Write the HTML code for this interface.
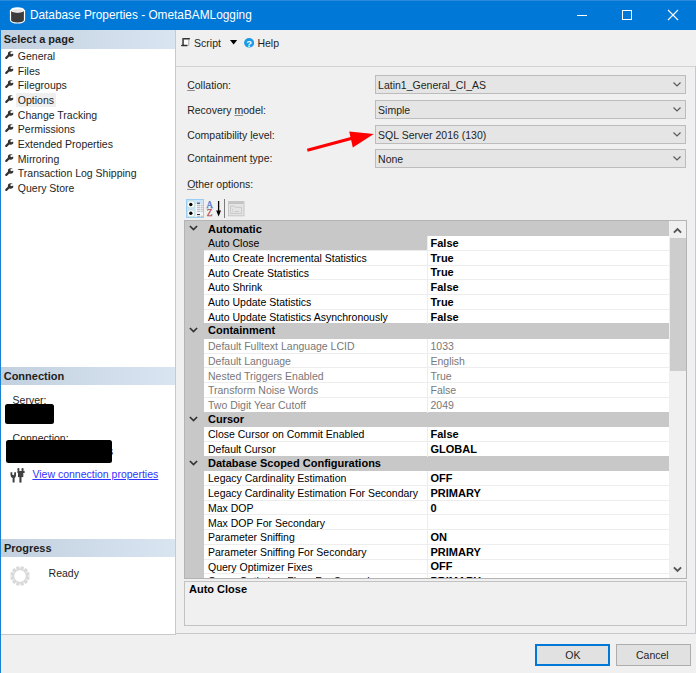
<!DOCTYPE html>
<html><head><meta charset="utf-8"><style>
*{margin:0;padding:0;box-sizing:border-box}
html,body{width:696px;height:673px;overflow:hidden;background:#f0f0f0;font-family:"Liberation Sans",sans-serif;font-size:10.5px;color:#000}
div,span,svg{position:absolute}
.t{white-space:nowrap;line-height:14px}
.b{font-weight:bold;font-size:11px}
.u{text-decoration:underline;text-decoration-color:#8a8a8a}
</style></head><body>
<div style="left:0px;top:0px;width:696px;height:30px;background:#0078d7"></div>
<div style="left:0px;top:0px;width:696px;height:1px;background:#2a8ad9"></div>
<svg style="left:9px;top:6px" width="17" height="18" viewBox="0 0 17 18"><path d="M1.5 4 V14 A6.5 2.8 0 0 0 15.5 14 V4" fill="#3c3c3c" stroke="#fff" stroke-width="1.2"/><ellipse cx="8.5" cy="4" rx="7" ry="2.8" fill="#fff"/><ellipse cx="8.5" cy="4.6" rx="5.6" ry="1.6" fill="#e6e6e6"/></svg>
<div class="t" style="left:29.9px;top:8.09px;font-size:11.85px;color:#fff;">Database Properties - OmetaBAMLogging</div>
<div style="left:577px;top:15px;width:10px;height:1px;background:#fff"></div>
<svg style="left:622px;top:10px" width="11" height="11"><rect x="0.5" y="0.5" width="9" height="9" fill="none" stroke="#fff" stroke-width="1"/></svg>
<svg style="left:667px;top:9px" width="12" height="12"><path d="M1 1L11 11M11 1L1 11" stroke="#fff" stroke-width="1.1"/></svg>
<div style="left:0px;top:30px;width:1px;height:643px;background:#1a82d4"></div>
<div style="left:1px;top:30px;width:174px;height:604px;background:#fff"></div>
<div style="left:175px;top:30px;width:1px;height:605px;background:#c8c9cc"></div>
<div style="left:1px;top:634px;width:175px;height:1px;background:#c8c9cc"></div>
<div style="left:1px;top:30px;width:174px;height:19px;background:linear-gradient(to right,#c2d0df,#d9e5f1)"></div>
<div class="t" style="left:3.7px;top:32.19px;font-size:11px;font-weight:bold;color:#1e1e1e;">Select a page</div>
<div style="left:16px;top:93px;width:40px;height:14px;background:#efefef"></div>
<svg style="left:5px;top:51.20px" width="9" height="9" viewBox="0 0 9 9"><path d="M1.3 6.9 L4.4 3.8" stroke="#333" stroke-width="2.2" stroke-linecap="round"/><circle cx="5.6" cy="2.9" r="2.75" fill="#333"/><path d="M5.7 2.8 L8.8 -0.3 L9.5 2.6 Z" fill="#fff"/><circle cx="6.4" cy="2.1" r="1.05" fill="#fff"/></svg>
<div class="t" style="left:17.8px;top:49.16px;font-size:10.5px;color:#1e1e1e;">General</div>
<svg style="left:5px;top:65.82px" width="9" height="9" viewBox="0 0 9 9"><path d="M1.3 6.9 L4.4 3.8" stroke="#333" stroke-width="2.2" stroke-linecap="round"/><circle cx="5.6" cy="2.9" r="2.75" fill="#333"/><path d="M5.7 2.8 L8.8 -0.3 L9.5 2.6 Z" fill="#fff"/><circle cx="6.4" cy="2.1" r="1.05" fill="#fff"/></svg>
<div class="t" style="left:17.8px;top:63.78px;font-size:10.5px;color:#1e1e1e;">Files</div>
<svg style="left:5px;top:80.44px" width="9" height="9" viewBox="0 0 9 9"><path d="M1.3 6.9 L4.4 3.8" stroke="#333" stroke-width="2.2" stroke-linecap="round"/><circle cx="5.6" cy="2.9" r="2.75" fill="#333"/><path d="M5.7 2.8 L8.8 -0.3 L9.5 2.6 Z" fill="#fff"/><circle cx="6.4" cy="2.1" r="1.05" fill="#fff"/></svg>
<div class="t" style="left:17.8px;top:78.40px;font-size:10.5px;color:#1e1e1e;">Filegroups</div>
<svg style="left:5px;top:95.06px" width="9" height="9" viewBox="0 0 9 9"><path d="M1.3 6.9 L4.4 3.8" stroke="#333" stroke-width="2.2" stroke-linecap="round"/><circle cx="5.6" cy="2.9" r="2.75" fill="#333"/><path d="M5.7 2.8 L8.8 -0.3 L9.5 2.6 Z" fill="#fff"/><circle cx="6.4" cy="2.1" r="1.05" fill="#fff"/></svg>
<div class="t" style="left:17.8px;top:93.02px;font-size:10.5px;color:#1e1e1e;">Options</div>
<svg style="left:5px;top:109.68px" width="9" height="9" viewBox="0 0 9 9"><path d="M1.3 6.9 L4.4 3.8" stroke="#333" stroke-width="2.2" stroke-linecap="round"/><circle cx="5.6" cy="2.9" r="2.75" fill="#333"/><path d="M5.7 2.8 L8.8 -0.3 L9.5 2.6 Z" fill="#fff"/><circle cx="6.4" cy="2.1" r="1.05" fill="#fff"/></svg>
<div class="t" style="left:17.8px;top:107.64px;font-size:10.5px;color:#1e1e1e;">Change Tracking</div>
<svg style="left:5px;top:124.30px" width="9" height="9" viewBox="0 0 9 9"><path d="M1.3 6.9 L4.4 3.8" stroke="#333" stroke-width="2.2" stroke-linecap="round"/><circle cx="5.6" cy="2.9" r="2.75" fill="#333"/><path d="M5.7 2.8 L8.8 -0.3 L9.5 2.6 Z" fill="#fff"/><circle cx="6.4" cy="2.1" r="1.05" fill="#fff"/></svg>
<div class="t" style="left:17.8px;top:122.26px;font-size:10.5px;color:#1e1e1e;">Permissions</div>
<svg style="left:5px;top:138.92px" width="9" height="9" viewBox="0 0 9 9"><path d="M1.3 6.9 L4.4 3.8" stroke="#333" stroke-width="2.2" stroke-linecap="round"/><circle cx="5.6" cy="2.9" r="2.75" fill="#333"/><path d="M5.7 2.8 L8.8 -0.3 L9.5 2.6 Z" fill="#fff"/><circle cx="6.4" cy="2.1" r="1.05" fill="#fff"/></svg>
<div class="t" style="left:17.8px;top:136.88px;font-size:10.5px;color:#1e1e1e;">Extended Properties</div>
<svg style="left:5px;top:153.54px" width="9" height="9" viewBox="0 0 9 9"><path d="M1.3 6.9 L4.4 3.8" stroke="#333" stroke-width="2.2" stroke-linecap="round"/><circle cx="5.6" cy="2.9" r="2.75" fill="#333"/><path d="M5.7 2.8 L8.8 -0.3 L9.5 2.6 Z" fill="#fff"/><circle cx="6.4" cy="2.1" r="1.05" fill="#fff"/></svg>
<div class="t" style="left:17.8px;top:151.50px;font-size:10.5px;color:#1e1e1e;">Mirroring</div>
<svg style="left:5px;top:168.16px" width="9" height="9" viewBox="0 0 9 9"><path d="M1.3 6.9 L4.4 3.8" stroke="#333" stroke-width="2.2" stroke-linecap="round"/><circle cx="5.6" cy="2.9" r="2.75" fill="#333"/><path d="M5.7 2.8 L8.8 -0.3 L9.5 2.6 Z" fill="#fff"/><circle cx="6.4" cy="2.1" r="1.05" fill="#fff"/></svg>
<div class="t" style="left:17.8px;top:166.12px;font-size:10.5px;color:#1e1e1e;">Transaction Log Shipping</div>
<svg style="left:5px;top:182.78px" width="9" height="9" viewBox="0 0 9 9"><path d="M1.3 6.9 L4.4 3.8" stroke="#333" stroke-width="2.2" stroke-linecap="round"/><circle cx="5.6" cy="2.9" r="2.75" fill="#333"/><path d="M5.7 2.8 L8.8 -0.3 L9.5 2.6 Z" fill="#fff"/><circle cx="6.4" cy="2.1" r="1.05" fill="#fff"/></svg>
<div class="t" style="left:17.8px;top:180.74px;font-size:10.5px;color:#1e1e1e;">Query Store</div>
<div style="left:1px;top:367px;width:174px;height:18px;background:linear-gradient(to right,#c2d0df,#d9e5f1)"></div>
<div class="t" style="left:3.7px;top:369.19px;font-size:11px;font-weight:bold;color:#1e1e1e;">Connection</div>
<div class="t" style="left:12.6px;top:393.06px;font-size:10.5px;color:#1e1e1e;">Server:</div>
<div style="left:5px;top:404px;width:49px;height:20px;background:#000;border-radius:2.5px"></div>
<div class="t" style="left:12.6px;top:431.36px;font-size:10.5px;color:#1e1e1e;">Connection:</div>
<div class="t" style="left:108px;top:443.96px;font-size:10.5px;color:#1e1e1e;">s</div>
<div style="left:6px;top:440px;width:106px;height:23px;background:#000;border-radius:2.5px"></div>
<svg style="left:6px;top:464px" width="24" height="22" viewBox="0 0 24 22"><path d="M4.5 8.3 H6.3 V10.6 Q7.25 11.9 8.2 10.6 V8.3 H10 V11 Q10 13.4 8.6 13.9 V18.6 H6.6 V13.9 Q4.5 13.4 4.5 11 Z" fill="#404040"/><rect x="11.4" y="4.1" width="2" height="2.8" rx="0.9" fill="#404040"/><rect x="15.5" y="4.1" width="2.1" height="2.8" rx="0.9" fill="#404040"/><rect x="11.4" y="6.9" width="7.2" height="2.1" fill="#404040"/><rect x="12" y="9" width="5.3" height="4.1" fill="#404040"/><rect x="13.4" y="13" width="2.1" height="5.6" fill="#404040"/></svg>
<div class="t" style="left:32.4px;top:466.96px;font-size:10.5px;color:#3333ff;text-decoration:underline;">View connection properties</div>
<div style="left:1px;top:539px;width:174px;height:18px;background:linear-gradient(to right,#c2d0df,#d9e5f1)"></div>
<div class="t" style="left:3.9px;top:540.69px;font-size:11px;font-weight:bold;color:#1e1e1e;">Progress</div>
<svg style="left:10.3px;top:565.8px" width="20" height="20" viewBox="0 0 20 20"><line x1="15.51" y1="11.48" x2="19.37" y2="12.51" stroke="#d9d9d9" stroke-width="3.4"/><line x1="14.03" y1="14.03" x2="16.86" y2="16.86" stroke="#d9d9d9" stroke-width="3.4"/><line x1="11.48" y1="15.51" x2="12.51" y2="19.37" stroke="#d9d9d9" stroke-width="3.4"/><line x1="8.52" y1="15.51" x2="7.49" y2="19.37" stroke="#d9d9d9" stroke-width="3.4"/><line x1="5.97" y1="14.03" x2="3.14" y2="16.86" stroke="#d9d9d9" stroke-width="3.4"/><line x1="4.49" y1="11.48" x2="0.63" y2="12.51" stroke="#d9d9d9" stroke-width="3.4"/><line x1="4.49" y1="8.52" x2="0.63" y2="7.49" stroke="#d9d9d9" stroke-width="3.4"/><line x1="5.97" y1="5.97" x2="3.14" y2="3.14" stroke="#d9d9d9" stroke-width="3.4"/><line x1="8.52" y1="4.49" x2="7.49" y2="0.63" stroke="#d9d9d9" stroke-width="3.4"/><line x1="11.48" y1="4.49" x2="12.51" y2="0.63" stroke="#d9d9d9" stroke-width="3.4"/><line x1="14.03" y1="5.97" x2="16.86" y2="3.14" stroke="#d9d9d9" stroke-width="3.4"/><line x1="15.51" y1="8.52" x2="19.37" y2="7.49" stroke="#d9d9d9" stroke-width="3.4"/></svg>
<div class="t" style="left:48.6px;top:565.76px;font-size:10.5px;color:#1e1e1e;">Ready</div>
<svg style="left:180px;top:37px" width="11" height="10" viewBox="0 0 11 10"><rect x="3.8" y="2.5" width="4.6" height="6" fill="#fbfbfb"/><rect x="8.2" y="2.5" width="1.1" height="6.3" fill="#b0b0b0"/><path d="M3.3 1 H9.3 A0.8 0.8 0 0 1 9.3 2.6 H3.3 Z" fill="#333"/><rect x="2.3" y="1" width="1.5" height="7" fill="#383838"/><path d="M1.8 7.7 H7.5 V9.2 H1.8 A0.75 0.75 0 0 1 1.8 7.7 Z" fill="#2e2e2e"/></svg>
<div class="t" style="left:194.1px;top:35.76px;font-size:10.5px;color:#1e1e1e;">Script</div>
<svg style="left:229.8px;top:40.3px" width="8" height="5"><path d="M0 0H7.2L3.6 4.6Z" fill="#000"/></svg>
<svg style="left:243.9px;top:37.8px" width="10.2" height="10" viewBox="0 0 10.2 10"><ellipse cx="5.1" cy="4.8" rx="5.05" ry="4.75" fill="#1a9ae6"/><text x="5.1" y="8.5" font-family="Liberation Sans" font-weight="bold" font-size="9.5" fill="#fff" text-anchor="middle">?</text></svg>
<div class="t" style="left:257.4px;top:35.76px;font-size:10.5px;color:#1e1e1e;">Help</div>
<div style="left:176px;top:66px;width:519px;height:1px;background:#d3d3d6"></div>
<div style="left:695px;top:66px;width:1px;height:568px;background:#c8c9cc"></div>
<div style="left:176px;top:633px;width:520px;height:1px;background:#c8c9cc"></div>
<div class="t" style="left:187.2px;top:78.16px;font-size:10.5px;color:#1e1e1e;"><span class="u" style="position:static">C</span>ollation:</div>
<div class="t" style="left:187.2px;top:102.86px;font-size:10.5px;color:#1e1e1e;">Recovery <span class="u" style="position:static">m</span>odel:</div>
<div class="t" style="left:187.2px;top:127.66px;font-size:10.5px;color:#1e1e1e;">Compatibility <span class="u" style="position:static">l</span>evel:</div>
<div class="t" style="left:187.2px;top:151.36px;font-size:10.5px;color:#1e1e1e;">Containment <span class="u" style="position:static">t</span>ype:</div>
<div class="t" style="left:187.2px;top:177.16px;font-size:10.5px;color:#1e1e1e;"><span class="u" style="position:static">O</span>ther options:</div>
<div style="left:375px;top:75px;width:311px;height:19px;background:#e5e5e5;border:1px solid #bcbcbc"></div>
<div class="t" style="left:378.1px;top:77.86px;font-size:10.5px;color:#1e1e1e;">Latin1_General_CI_AS</div>
<svg style="left:673px;top:82.2px" width="8" height="5" viewBox="0 0 8 5"><path d="M0.5 0.5L4 4L7.5 0.5" fill="none" stroke="#5a5a5a" stroke-width="1.2"/></svg>
<div style="left:375px;top:100px;width:311px;height:19px;background:#e5e5e5;border:1px solid #bcbcbc"></div>
<div class="t" style="left:378.1px;top:102.86px;font-size:10.5px;color:#1e1e1e;">Simple</div>
<svg style="left:673px;top:107.2px" width="8" height="5" viewBox="0 0 8 5"><path d="M0.5 0.5L4 4L7.5 0.5" fill="none" stroke="#5a5a5a" stroke-width="1.2"/></svg>
<div style="left:375px;top:125px;width:311px;height:19px;background:#e5e5e5;border:1px solid #bcbcbc"></div>
<div class="t" style="left:378.1px;top:127.86px;font-size:10.5px;color:#1e1e1e;">SQL Server 2016 (130)</div>
<svg style="left:673px;top:132.2px" width="8" height="5" viewBox="0 0 8 5"><path d="M0.5 0.5L4 4L7.5 0.5" fill="none" stroke="#5a5a5a" stroke-width="1.2"/></svg>
<div style="left:375px;top:149px;width:311px;height:19px;background:#e5e5e5;border:1px solid #bcbcbc"></div>
<div class="t" style="left:378.1px;top:151.86px;font-size:10.5px;color:#1e1e1e;">None</div>
<svg style="left:673px;top:156.2px" width="8" height="5" viewBox="0 0 8 5"><path d="M0.5 0.5L4 4L7.5 0.5" fill="none" stroke="#5a5a5a" stroke-width="1.2"/></svg>
<svg style="left:300px;top:125px" width="80" height="30" viewBox="300 125 80 30"><path d="M307.3 150.3 L352 138.3" stroke="#ff0000" stroke-width="3"/><path d="M349.2 131.5 L373.8 134 L352.8 147.6 Z" fill="#ff0000"/></svg>
<div style="left:186px;top:199px;width:18px;height:19px;background:#cce4f7;border:1px solid #99cdf3"></div>
<svg style="left:186px;top:199px" width="18" height="19" viewBox="0 0 18 19"><rect x="1.3" y="2" width="7.3" height="6.8" rx="2.2" fill="#fbfbfb" stroke="#b5dccf" stroke-width="0.8"/><circle cx="4.8" cy="5.5" r="1.7" fill="#000"/><rect x="1.3" y="11" width="7.3" height="6.8" rx="2.2" fill="#fbfbfb" stroke="#b5dccf" stroke-width="0.8"/><circle cx="4.8" cy="14.3" r="1.7" fill="#000"/><rect x="9.6" y="5" width="7.4" height="13" fill="#f2f6fa"/><path d="M11 4.2h3M11 15.5h3" stroke="#333" stroke-width="1"/><path d="M11 6.3h3M11 8.3h3M11 10.3h3M11 12.3h3M11 17.3h3M14.6 6.3h2.2M14.6 8.3h2.2M14.6 10.3h2.2M14.6 12.3h2.2M14.6 17.3h2.2" stroke="#9a9a9a" stroke-width="0.7"/></svg>
<svg style="left:205px;top:200px" width="17" height="17" viewBox="0 0 17 17"><text x="4.6" y="7.9" font-family="Liberation Serif" font-size="9.4" fill="#4f76cc" text-anchor="middle" stroke="#4f76cc" stroke-width="0.25">A</text><text x="4.6" y="16" font-family="Liberation Serif" font-size="9.4" fill="#b24d48" text-anchor="middle" stroke="#b24d48" stroke-width="0.25">Z</text><path d="M13.6 1V13" stroke="#000" stroke-width="1.3"/><path d="M11.2 10.6L13.6 16.4L16 10.6Z" fill="#000"/></svg>
<div style="left:224px;top:199px;width:1px;height:19px;background:#7a7a7a"></div>
<svg style="left:228px;top:201px" width="17" height="16" viewBox="0 0 17 16"><rect x="0.5" y="0.5" width="15.5" height="14.3" fill="#e4e4e4" stroke="#c6c6c6"/><rect x="1" y="1" width="14.5" height="2" fill="#c4c4c4"/><path d="M2.6 12.6 V5 H6 L7.4 6.3 H13.6 V12.6 Z" fill="none" stroke="#c2c2c2" stroke-width="0.8"/><path d="M4 8.5h1.2M4 10.6h1.2M6.5 10.6h4.5" stroke="#bdbdbd" stroke-width="0.8"/></svg>
<div style="left:184px;top:220px;width:503px;height:359px;background:#f0f0f0;border:1px solid #b4b4b4"></div>
<div style="left:185px;top:221px;width:501px;height:357px;overflow:hidden"><div style="left:0;top:0;width:484px;height:357px;background:#c8c8c8"></div><svg style="left:4.4px;top:4px" width="10" height="7" viewBox="0 0 10 7"><path d="M0.9 1L4.5 4.6L8.1 1" fill="none" stroke="#333" stroke-width="1.7"/></svg><div class="t" style="left:23px;top:0.90px;font-size:11px;font-weight:bold;color:#000">Automatic</div><div style="left:243px;top:15px;width:241px;height:14px;background:#fff"></div><div style="left:19px;top:29px;width:465px;height:1px;background:#ededed"></div><div style="left:242px;top:15px;width:1px;height:15px;background:#ededed"></div><div class="t" style="left:23px;top:15.26px;font-size:10.5px;color:#000">Auto Close</div><div class="t" style="left:245.5px;top:15.09px;font-size:11px;font-weight:bold;color:#000">False</div><div style="left:19px;top:30px;width:223px;height:14px;background:#fff"></div><div style="left:243px;top:30px;width:241px;height:14px;background:#fff"></div><div style="left:19px;top:44px;width:465px;height:1px;background:#ededed"></div><div style="left:242px;top:30px;width:1px;height:15px;background:#ededed"></div><div class="t" style="left:23px;top:29.96px;font-size:10.5px;color:#000">Auto Create Incremental Statistics</div><div class="t" style="left:245.5px;top:29.79px;font-size:11px;font-weight:bold;color:#000">True</div><div style="left:19px;top:45px;width:223px;height:13px;background:#fff"></div><div style="left:243px;top:45px;width:241px;height:13px;background:#fff"></div><div style="left:19px;top:58px;width:465px;height:1px;background:#ededed"></div><div style="left:242px;top:45px;width:1px;height:14px;background:#ededed"></div><div class="t" style="left:23px;top:44.66px;font-size:10.5px;color:#000">Auto Create Statistics</div><div class="t" style="left:245.5px;top:44.49px;font-size:11px;font-weight:bold;color:#000">True</div><div style="left:19px;top:59px;width:223px;height:14px;background:#fff"></div><div style="left:243px;top:59px;width:241px;height:14px;background:#fff"></div><div style="left:19px;top:73px;width:465px;height:1px;background:#ededed"></div><div style="left:242px;top:59px;width:1px;height:15px;background:#ededed"></div><div class="t" style="left:23px;top:59.36px;font-size:10.5px;color:#000">Auto Shrink</div><div class="t" style="left:245.5px;top:59.19px;font-size:11px;font-weight:bold;color:#000">False</div><div style="left:19px;top:74px;width:223px;height:14px;background:#fff"></div><div style="left:243px;top:74px;width:241px;height:14px;background:#fff"></div><div style="left:19px;top:88px;width:465px;height:1px;background:#ededed"></div><div style="left:242px;top:74px;width:1px;height:15px;background:#ededed"></div><div class="t" style="left:23px;top:74.06px;font-size:10.5px;color:#000">Auto Update Statistics</div><div class="t" style="left:245.5px;top:73.89px;font-size:11px;font-weight:bold;color:#000">True</div><div style="left:19px;top:89px;width:223px;height:13px;background:#fff"></div><div style="left:243px;top:89px;width:241px;height:13px;background:#fff"></div><div style="left:242px;top:89px;width:1px;height:14px;background:#ededed"></div><div class="t" style="left:23px;top:88.76px;font-size:10.5px;color:#000">Auto Update Statistics Asynchronously</div><div class="t" style="left:245.5px;top:88.59px;font-size:11px;font-weight:bold;color:#000">False</div><svg style="left:4.4px;top:106px" width="10" height="7" viewBox="0 0 10 7"><path d="M0.9 1L4.5 4.6L8.1 1" fill="none" stroke="#333" stroke-width="1.7"/></svg><div class="t" style="left:23px;top:102.40px;font-size:11px;font-weight:bold;color:#000">Containment</div><div style="left:19px;top:118px;width:223px;height:14px;background:#fff"></div><div style="left:243px;top:118px;width:241px;height:14px;background:#fff"></div><div style="left:19px;top:132px;width:465px;height:1px;background:#ededed"></div><div style="left:242px;top:118px;width:1px;height:15px;background:#ededed"></div><div class="t" style="left:23px;top:118.16px;font-size:10.5px;color:#787878">Default Fulltext Language LCID</div><div class="t" style="left:245.5px;top:118.16px;font-size:10.5px;color:#787878">1033</div><div style="left:19px;top:133px;width:223px;height:13px;background:#fff"></div><div style="left:243px;top:133px;width:241px;height:13px;background:#fff"></div><div style="left:19px;top:146px;width:465px;height:1px;background:#ededed"></div><div style="left:242px;top:133px;width:1px;height:14px;background:#ededed"></div><div class="t" style="left:23px;top:132.86px;font-size:10.5px;color:#787878">Default Language</div><div class="t" style="left:245.5px;top:132.86px;font-size:10.5px;color:#787878">English</div><div style="left:19px;top:147px;width:223px;height:14px;background:#fff"></div><div style="left:243px;top:147px;width:241px;height:14px;background:#fff"></div><div style="left:19px;top:161px;width:465px;height:1px;background:#ededed"></div><div style="left:242px;top:147px;width:1px;height:15px;background:#ededed"></div><div class="t" style="left:23px;top:147.56px;font-size:10.5px;color:#787878">Nested Triggers Enabled</div><div class="t" style="left:245.5px;top:147.56px;font-size:10.5px;color:#787878">True</div><div style="left:19px;top:162px;width:223px;height:14px;background:#fff"></div><div style="left:243px;top:162px;width:241px;height:14px;background:#fff"></div><div style="left:19px;top:176px;width:465px;height:1px;background:#ededed"></div><div style="left:242px;top:162px;width:1px;height:15px;background:#ededed"></div><div class="t" style="left:23px;top:162.26px;font-size:10.5px;color:#787878">Transform Noise Words</div><div class="t" style="left:245.5px;top:162.26px;font-size:10.5px;color:#787878">False</div><div style="left:19px;top:177px;width:223px;height:14px;background:#fff"></div><div style="left:243px;top:177px;width:241px;height:14px;background:#fff"></div><div style="left:242px;top:177px;width:1px;height:15px;background:#ededed"></div><div class="t" style="left:23px;top:176.96px;font-size:10.5px;color:#787878">Two Digit Year Cutoff</div><div class="t" style="left:245.5px;top:176.96px;font-size:10.5px;color:#787878">2049</div><svg style="left:4.4px;top:195px" width="10" height="7" viewBox="0 0 10 7"><path d="M0.9 1L4.5 4.6L8.1 1" fill="none" stroke="#333" stroke-width="1.7"/></svg><div class="t" style="left:23px;top:191.40px;font-size:11px;font-weight:bold;color:#000">Cursor</div><div style="left:19px;top:206px;width:223px;height:14px;background:#fff"></div><div style="left:243px;top:206px;width:241px;height:14px;background:#fff"></div><div style="left:19px;top:220px;width:465px;height:1px;background:#ededed"></div><div style="left:242px;top:206px;width:1px;height:15px;background:#ededed"></div><div class="t" style="left:23px;top:206.36px;font-size:10.5px;color:#000">Close Cursor on Commit Enabled</div><div class="t" style="left:245.5px;top:206.19px;font-size:11px;font-weight:bold;color:#000">False</div><div style="left:19px;top:221px;width:223px;height:14px;background:#fff"></div><div style="left:243px;top:221px;width:241px;height:14px;background:#fff"></div><div style="left:242px;top:221px;width:1px;height:15px;background:#ededed"></div><div class="t" style="left:23px;top:221.06px;font-size:10.5px;color:#000">Default Cursor</div><div class="t" style="left:245.5px;top:220.89px;font-size:11px;font-weight:bold;color:#000">GLOBAL</div><svg style="left:4.4px;top:239px" width="10" height="7" viewBox="0 0 10 7"><path d="M0.9 1L4.5 4.6L8.1 1" fill="none" stroke="#333" stroke-width="1.7"/></svg><div class="t" style="left:23px;top:235.40px;font-size:11px;font-weight:bold;color:#000">Database Scoped Configurations</div><div style="left:19px;top:250px;width:223px;height:14px;background:#fff"></div><div style="left:243px;top:250px;width:241px;height:14px;background:#fff"></div><div style="left:19px;top:264px;width:465px;height:1px;background:#ededed"></div><div style="left:242px;top:250px;width:1px;height:15px;background:#ededed"></div><div class="t" style="left:23px;top:250.46px;font-size:10.5px;color:#000">Legacy Cardinality Estimation</div><div class="t" style="left:245.5px;top:250.29px;font-size:11px;font-weight:bold;color:#000">OFF</div><div style="left:19px;top:265px;width:223px;height:14px;background:#fff"></div><div style="left:243px;top:265px;width:241px;height:14px;background:#fff"></div><div style="left:19px;top:279px;width:465px;height:1px;background:#ededed"></div><div style="left:242px;top:265px;width:1px;height:15px;background:#ededed"></div><div class="t" style="left:23px;top:265.16px;font-size:10.5px;color:#000">Legacy Cardinality Estimation For Secondary</div><div class="t" style="left:245.5px;top:264.99px;font-size:11px;font-weight:bold;color:#000">PRIMARY</div><div style="left:19px;top:280px;width:223px;height:13px;background:#fff"></div><div style="left:243px;top:280px;width:241px;height:13px;background:#fff"></div><div style="left:19px;top:293px;width:465px;height:1px;background:#ededed"></div><div style="left:242px;top:280px;width:1px;height:14px;background:#ededed"></div><div class="t" style="left:23px;top:279.86px;font-size:10.5px;color:#000">Max DOP</div><div class="t" style="left:245.5px;top:279.69px;font-size:11px;font-weight:bold;color:#000">0</div><div style="left:19px;top:294px;width:223px;height:14px;background:#fff"></div><div style="left:243px;top:294px;width:241px;height:14px;background:#fff"></div><div style="left:19px;top:308px;width:465px;height:1px;background:#ededed"></div><div style="left:242px;top:294px;width:1px;height:15px;background:#ededed"></div><div class="t" style="left:23px;top:294.56px;font-size:10.5px;color:#000">Max DOP For Secondary</div><div style="left:19px;top:309px;width:223px;height:14px;background:#fff"></div><div style="left:243px;top:309px;width:241px;height:14px;background:#fff"></div><div style="left:19px;top:323px;width:465px;height:1px;background:#ededed"></div><div style="left:242px;top:309px;width:1px;height:15px;background:#ededed"></div><div class="t" style="left:23px;top:309.26px;font-size:10.5px;color:#000">Parameter Sniffing</div><div class="t" style="left:245.5px;top:309.09px;font-size:11px;font-weight:bold;color:#000">ON</div><div style="left:19px;top:324px;width:223px;height:14px;background:#fff"></div><div style="left:243px;top:324px;width:241px;height:14px;background:#fff"></div><div style="left:19px;top:338px;width:465px;height:1px;background:#ededed"></div><div style="left:242px;top:324px;width:1px;height:15px;background:#ededed"></div><div class="t" style="left:23px;top:323.96px;font-size:10.5px;color:#000">Parameter Sniffing For Secondary</div><div class="t" style="left:245.5px;top:323.79px;font-size:11px;font-weight:bold;color:#000">PRIMARY</div><div style="left:19px;top:339px;width:223px;height:13px;background:#fff"></div><div style="left:243px;top:339px;width:241px;height:13px;background:#fff"></div><div style="left:19px;top:352px;width:465px;height:1px;background:#ededed"></div><div style="left:242px;top:339px;width:1px;height:14px;background:#ededed"></div><div class="t" style="left:23px;top:338.66px;font-size:10.5px;color:#000">Query Optimizer Fixes</div><div class="t" style="left:245.5px;top:338.49px;font-size:11px;font-weight:bold;color:#000">OFF</div><div style="left:19px;top:353px;width:223px;height:14px;background:#fff"></div><div style="left:243px;top:353px;width:241px;height:14px;background:#fff"></div><div style="left:242px;top:353px;width:1px;height:15px;background:#ededed"></div><div class="t" style="left:23px;top:353.36px;font-size:10.5px;color:#000">Query Optimizer Fixes For Secondary</div><div class="t" style="left:245.5px;top:353.19px;font-size:11px;font-weight:bold;color:#000">PRIMARY</div><div style="left:484px;top:0;width:17px;height:357px;background:#f0f0f0"></div><div style="left:485px;top:17px;width:16px;height:133px;background:#cdcdcd"></div><svg style="left:488px;top:6px" width="9" height="7" viewBox="0 0 9 7"><path d="M0.9 5.7L4.5 2.1L8.1 5.7" fill="none" stroke="#555" stroke-width="1.9"/></svg><svg style="left:488px;top:345px" width="9" height="7" viewBox="0 0 9 7"><path d="M0.9 1.3L4.5 4.9L8.1 1.3" fill="none" stroke="#555" stroke-width="1.9"/></svg></div>
<div style="left:184px;top:581px;width:503px;height:45px;background:#f0f0f0;border:1px solid #c2c2c2"></div>
<div class="t" style="left:189px;top:581.99px;font-size:11px;font-weight:bold;color:#000;">Auto Close</div>
<div style="left:535px;top:644px;width:75px;height:22px;background:#e1e1e1;border:2px solid #0078d7"></div>
<div class="t" style="left:565.3px;top:648.36px;font-size:10.5px;color:#1e1e1e;">OK</div>
<div style="left:616px;top:644px;width:75px;height:22px;background:#e1e1e1;border:1px solid #adadad"></div>
<div class="t" style="left:636px;top:648.36px;font-size:10.5px;color:#1e1e1e;">Cancel</div>
</body></html>
